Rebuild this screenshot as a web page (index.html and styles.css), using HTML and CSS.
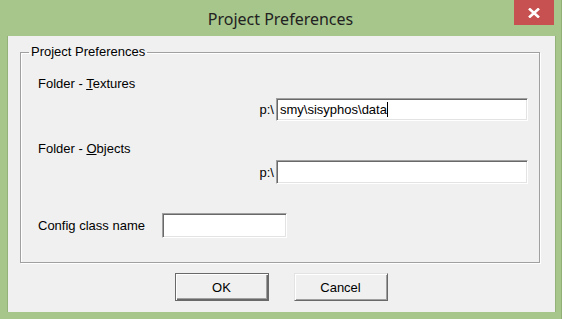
FILE: index.html
```html
<!DOCTYPE html>
<html lang="en">
<head>
    <meta charset="utf-8"/>
    <title>Project Preferences</title>
    <link rel="stylesheet" href="styles.css">
</head>
<body>
    <div class="window">
        <header class="titlebar">
            <span></span>
            <h1 class="title">Project Preferences</h1>
            <button class="close" type="button" aria-label="Close">
                <svg width="12" height="10" viewBox="0 0 12 10">
                    <path d="M1 0.5 L11 9.5 M11 0.5 L1 9.5" stroke="#fff" stroke-width="2.6" fill="none"/>
                </svg>
            </button>
        </header>

        <main class="client">
            <fieldset class="group">
                <legend>Project Preferences</legend>

                <div class="label-row">Folder - <u>T</u>extures</div>
                <div class="path-row">
                    <span>p:\</span>
                    <div class="field wide">smy\sisyphos\data<span class="caret"></span></div>
                </div>

                <div class="label-row second">Folder - <u>O</u>bjects</div>
                <div class="path-row tight">
                    <span>p:\</span>
                    <div class="field wide tall"></div>
                </div>

                <div class="config-row">
                    <span>Config class name</span>
                    <div class="field short"></div>
                </div>
            </fieldset>

            <div class="buttons">
                <button class="btn default" type="button"><u>O</u>K</button>
                <button class="btn" type="button">Cancel</button>
            </div>
        </main>
    </div>
</body>
</html>
```

FILE: styles.css
```css
body {
    margin: 0;
    padding: 0;
    font-family: "Liberation Sans", Arial, sans-serif;
    font-size: 13px;
    color: #000;
    background-color: #a6c68b;
}
.window {
    width: 562px;
    height: 319px;
    box-sizing: border-box;
    border-right: 1px solid #90b076;
}

/* title bar */
.titlebar {
    height: 36px;
    display: grid;
    grid-template-columns: 1fr auto 1fr;
    align-items: start;
}
.title {
    margin: 0;
    padding-top: 8px;
    font-family: "Noto Sans", sans-serif;
    font-size: 16px;
    font-weight: normal;
    line-height: 22px;
    color: #222;
}
.close {
    justify-self: end;
    margin-right: 7px;
    width: 40px;
    height: 25px;
    border: 0;
    padding: 0;
    background-color: #c75050;
    display: flex;
    align-items: center;
    justify-content: center;
}

/* client area */
.client {
    margin: 0 6px 0 8px;
    height: 276px;
    background-color: #f0f0f0;
    box-shadow: -1px 0 #93b27a, 1px 0 #93b27a;
    overflow: hidden;
}
.group {
    margin: 9px 15px 0 12px;
    padding: 17px 11px 24px 17px;
    border: 1px solid #a0a0a0;
    box-shadow: inset 1px 1px #fff, 1px 1px #fff;
}
.group legend {
    margin-left: -9px;
    padding: 0 2px;
    line-height: 14px;
}
.label-row {
    line-height: 16px;
}
.label-row.second {
    margin-top: 20px;
}
.path-row {
    margin-top: 6px;
    display: flex;
    justify-content: flex-end;
    align-items: center;
    gap: 2px;
}
.path-row.tight {
    margin-top: 3px;
}
.config-row {
    margin-top: 29px;
    display: flex;
    align-items: center;
}
.config-row span {
    width: 124px;
}

/* sunken edit boxes */
.field {
    box-sizing: border-box;
    height: 23px;
    padding: 2px 3px;
    line-height: 17px;
    background-color: #fff;
    border: 1px solid;
    border-color: #a0a0a0 #fff #fff #a0a0a0;
    box-shadow: inset 1px 1px #696969, inset -1px -1px #e3e3e3;
    display: flex;
    align-items: center;
}
.field.wide {
    width: 252px;
}
.field.tall {
    height: 24px;
}
.field.short {
    width: 125px;
    height: 25px;
}
.caret {
    width: 1px;
    height: 15px;
    background-color: #000;
}

/* push buttons */
.buttons {
    margin-top: 10px;
    display: flex;
    justify-content: center;
    gap: 25px;
    padding-right: 1px;
}
.btn {
    width: 94px;
    height: 28px;
    padding: 0;
    font-family: "Liberation Sans", Arial, sans-serif;
    font-size: 13px;
    color: #000;
    background-color: #f0f0f0;
    border: 1px solid;
    border-color: #e3e3e3 #696969 #696969 #e3e3e3;
    box-shadow: inset 1px 1px #fff, inset -1px -1px #a0a0a0;
}
.btn u {
    text-decoration: none;
}
.btn.default {
    border-color: #696969;
    box-shadow: inset 1px 1px #fff, inset -1px -1px #696969, inset -2px -2px #a0a0a0;
}
```
